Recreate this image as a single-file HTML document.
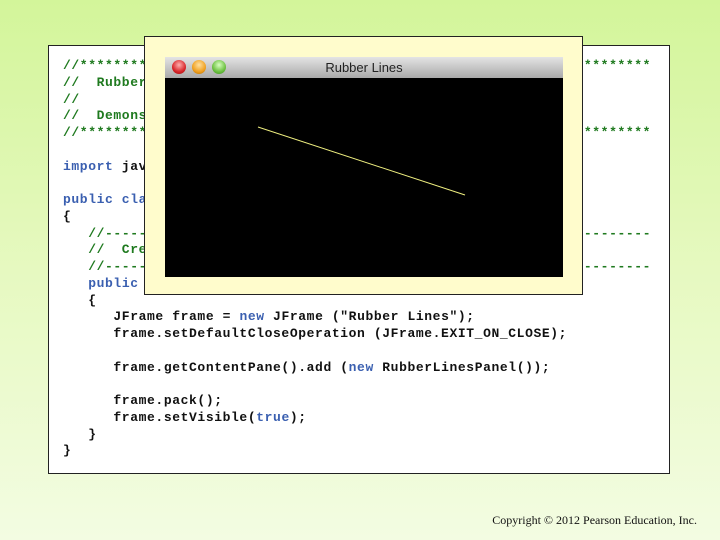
<!DOCTYPE html>
<html><head><style>
html,body{margin:0;padding:0}
body{width:720px;height:540px;position:relative;overflow:hidden;background:linear-gradient(#d3f59a 0%,#e6f9c0 50%,#f3fce2 100%);font-family:"Liberation Sans",sans-serif}
#code{position:absolute;left:48px;top:45px;width:620px;height:427px;background:#fff;border:1px solid #222}
pre{position:absolute;left:14px;top:12px;margin:0;font-family:"Liberation Mono",monospace;font-size:13px;font-weight:bold;line-height:16.75px;color:#111;letter-spacing:0.6px}
.c{color:#1f7a1f}.k{color:#3a5fb0}
#win{position:absolute;left:144px;top:36px;width:437px;height:257px;background:#fffccc;border:1px solid #222}
#tb{position:absolute;left:20px;top:20px;width:398px;height:21px;background:linear-gradient(#e4e4e4,#a9a9a9);font-size:13px;color:#222;text-align:center;line-height:21px}
.b{position:absolute;top:3px;width:14px;height:14px;border-radius:50%}
#bk{position:absolute;left:20px;top:41px;width:398px;height:199px;background:#000}
#copy{position:absolute;right:23px;top:513px;font-family:"Liberation Serif",serif;font-size:12px;color:#111}
</style></head><body>
<div id="code"><pre><span class="c">//********************************************************************
//  RubberLines.java       Author: Lewis/Loftus
//
//  Demonstrates mouse events and rubberbanding.
//********************************************************************</span>

<span class="k">import</span> javax.swing.*;

<span class="k">public class</span> RubberLines
{
   <span class="c">//-----------------------------------------------------------------
   //  Creates and displays the application frame.
   //-----------------------------------------------------------------</span>
   <span class="k">public static void</span> main (String[] args)
   {
      JFrame frame = <span class="k">new</span> JFrame ("Rubber Lines");
      frame.setDefaultCloseOperation (JFrame.EXIT_ON_CLOSE);

      frame.getContentPane().add (<span class="k">new</span> RubberLinesPanel());

      frame.pack();
      frame.setVisible(<span class="k">true</span>);
   }
}</pre></div>
<div id="win">
<div id="tb">Rubber Lines
<div class="b" style="left:7px;background:radial-gradient(circle at 50% 35%,#ffb0b0,#d8262a 60%,#9a1010)"></div>
<div class="b" style="left:27px;background:radial-gradient(circle at 50% 35%,#ffe0a0,#f0a020 60%,#b06a00)"></div>
<div class="b" style="left:47px;background:radial-gradient(circle at 50% 35%,#d8ffc0,#6cc040 60%,#3a8a20)"></div>
</div>
<div id="bk"><svg width="398" height="199"><line x1="93" y1="49" x2="300" y2="117" stroke="#f0f080" stroke-width="1"/></svg></div>
</div>
<div id="copy">Copyright © 2012 Pearson Education, Inc.</div>
</body></html>
